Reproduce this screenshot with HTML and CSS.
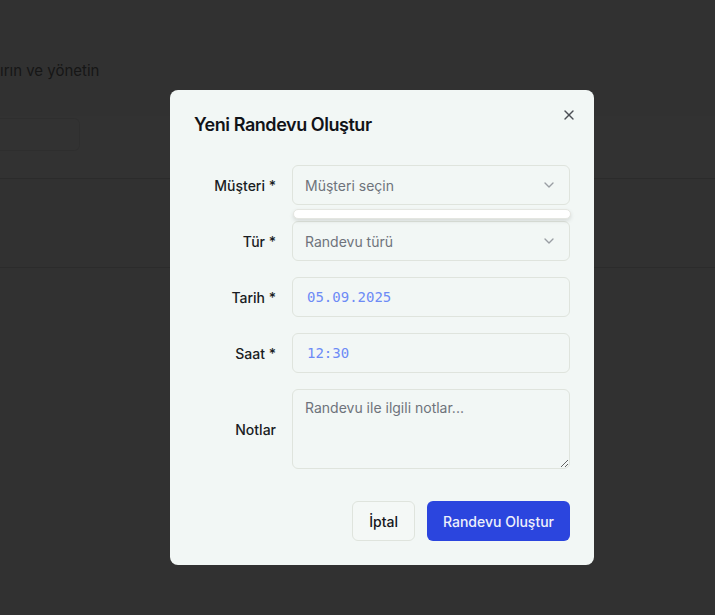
FILE: index.html
```html
<!DOCTYPE html>
<html lang="tr">
<head>
<meta charset="utf-8">
<title>Yeni Randevu Oluştur</title>
<link rel="stylesheet" href="styles.css">
</head>
<body>
<div class="page">
  <p class="subtitle">ırın ve yönetin</p>
  <div class="toolbar">
    <div class="search"></div>
  </div>
  <div class="table-row"></div>
  <div class="table-row short"></div>
</div>

<div class="overlay"></div>

<div class="dialog" role="dialog">
  <button class="close" aria-label="Kapat">
    <svg width="16" height="16" viewBox="0 0 24 24" fill="none" stroke="currentColor" stroke-width="2" stroke-linecap="round" stroke-linejoin="round"><path d="M18 6 6 18"/><path d="m6 6 12 12"/></svg>
  </button>
  <h2 class="title">Yeni Randevu Oluştur</h2>
  <form class="form">
    <div class="row">
      <label class="label">Müşteri *</label>
      <div class="field">
        <div class="select">
          <span class="placeholder">Müşteri seçin</span>
          <svg class="chev" width="16" height="16" viewBox="0 0 24 24" fill="none" stroke="currentColor" stroke-width="2" stroke-linecap="round" stroke-linejoin="round"><path d="m6 9 6 6 6-6"/></svg>
        </div>
        <div class="popover"></div>
      </div>
    </div>
    <div class="row">
      <label class="label">Tür *</label>
      <div class="field">
        <div class="select">
          <span class="placeholder">Randevu türü</span>
          <svg class="chev" width="16" height="16" viewBox="0 0 24 24" fill="none" stroke="currentColor" stroke-width="2" stroke-linecap="round" stroke-linejoin="round"><path d="m6 9 6 6 6-6"/></svg>
        </div>
      </div>
    </div>
    <div class="row">
      <label class="label">Tarih *</label>
      <div class="field">
        <div class="input"><span class="mono">05.09.2025</span></div>
      </div>
    </div>
    <div class="row">
      <label class="label">Saat *</label>
      <div class="field">
        <div class="input"><span class="mono">12:30</span></div>
      </div>
    </div>
    <div class="row">
      <label class="label">Notlar</label>
      <div class="field">
        <textarea class="textarea" placeholder="Randevu ile ilgili notlar..."></textarea>
      </div>
    </div>
  </form>
  <div class="footer">
    <button class="btn btn-outline" type="button">İptal</button>
    <button class="btn btn-primary" type="button">Randevu Oluştur</button>
  </div>
</div>
</body>
</html>
```
FILE: styles.css
```css
* { box-sizing: border-box; }
html, body { margin: 0; padding: 0; }
body {
  width: 715px;
  height: 615px;
  overflow: hidden;
  background: #f5f5f5;
  font-family: Inter, "Noto Sans", sans-serif;
  position: relative;
}

.page { padding-top: 60px; }
.subtitle {
  margin: 0;
  font-size: 15px;
  line-height: 22px;
  color: #707070;
}
.toolbar {
  margin-top: 34px;
  height: 63px;
  padding-top: 2px;
  border-bottom: 1px solid #d8d8d8;
  background: #f8f8f8;
}
.search {
  width: 80px;
  height: 33px;
  border: 1px solid #e6e6e6;
  border-left: none;
  border-radius: 0 6px 6px 0;
  background: #fafafa;
}
.table-row {
  height: 89px;
  border-bottom: 1px solid #d8d8d8;
}
.table-row.short { height: 40px; border-bottom: none; }

.overlay {
  position: absolute;
  inset: 0;
  background: rgba(0, 0, 0, 0.8);
}

.dialog {
  position: absolute;
  left: 170px;
  top: 90px;
  width: 424px;
  height: 475px;
  padding: 25px 24px 24px;
  background: #f2f7f5;
  border-radius: 8px;
  display: flex;
  flex-direction: column;
  gap: 16px;
}
.close {
  position: absolute;
  right: 17px;
  top: 17px;
  width: 16px;
  height: 16px;
  padding: 0;
  border: none;
  background: transparent;
  color: #4b4f55;
  display: flex;
}
.title {
  margin: 1px 0 -1px;
  font-size: 18px;
  line-height: 18px;
  font-weight: 600;
  letter-spacing: -0.45px;
  color: #111318;
}
.form {
  padding: 16px 0;
  display: flex;
  flex-direction: column;
  gap: 16px;
}
.row {
  display: grid;
  grid-template-columns: 82px 1fr;
  column-gap: 16px;
  align-items: center;
}
.label {
  text-align: right;
  font-size: 14px;
  font-weight: 500;
  color: #1a1d23;
}
.field { position: relative; }
.select, .input {
  height: 40px;
  border: 1px solid #dfe4dd;
  border-radius: 6px;
  padding: 0 12px;
  display: flex;
  align-items: center;
  justify-content: space-between;
  font-size: 14px;
}
.placeholder { color: #6e737b; }
.chev { color: #9a9ea3; }
.mono {
  font-family: "DejaVu Sans Mono", monospace;
  font-size: 14px;
  color: #6d8bf5;
  padding-left: 2px;
}
.popover {
  position: absolute;
  left: 1px;
  right: -1px;
  top: 44px;
  height: 10px;
  background: #ffffff;
  border: 1px solid #e4e6e1;
  border-radius: 6px;
  box-shadow: 0 2px 4px rgba(0, 0, 0, 0.12);
  z-index: 2;
}
.textarea {
  display: block;
  width: 100%;
  height: 80px;
  border: 1px solid #dfe4dd;
  border-radius: 6px;
  padding: 8px 12px;
  background: transparent;
  font-family: Inter, "Noto Sans", sans-serif;
  font-size: 14px;
  line-height: 20px;
  color: #111;
  resize: vertical;
}
.textarea::placeholder { color: #6e737b; }

.footer {
  display: flex;
  justify-content: flex-end;
  gap: 12px;
}
.btn {
  height: 40px;
  padding: 0 16px;
  border-radius: 6px;
  font-family: Inter, "Noto Sans", sans-serif;
  font-size: 14px;
  font-weight: 500;
}
.btn-outline {
  border: 1px solid #dfe4dd;
  background: #f4f8f6;
  color: #15171c;
}
.btn-primary {
  border: none;
  background: #2b45de;
  color: #eef0fb;
}
```
